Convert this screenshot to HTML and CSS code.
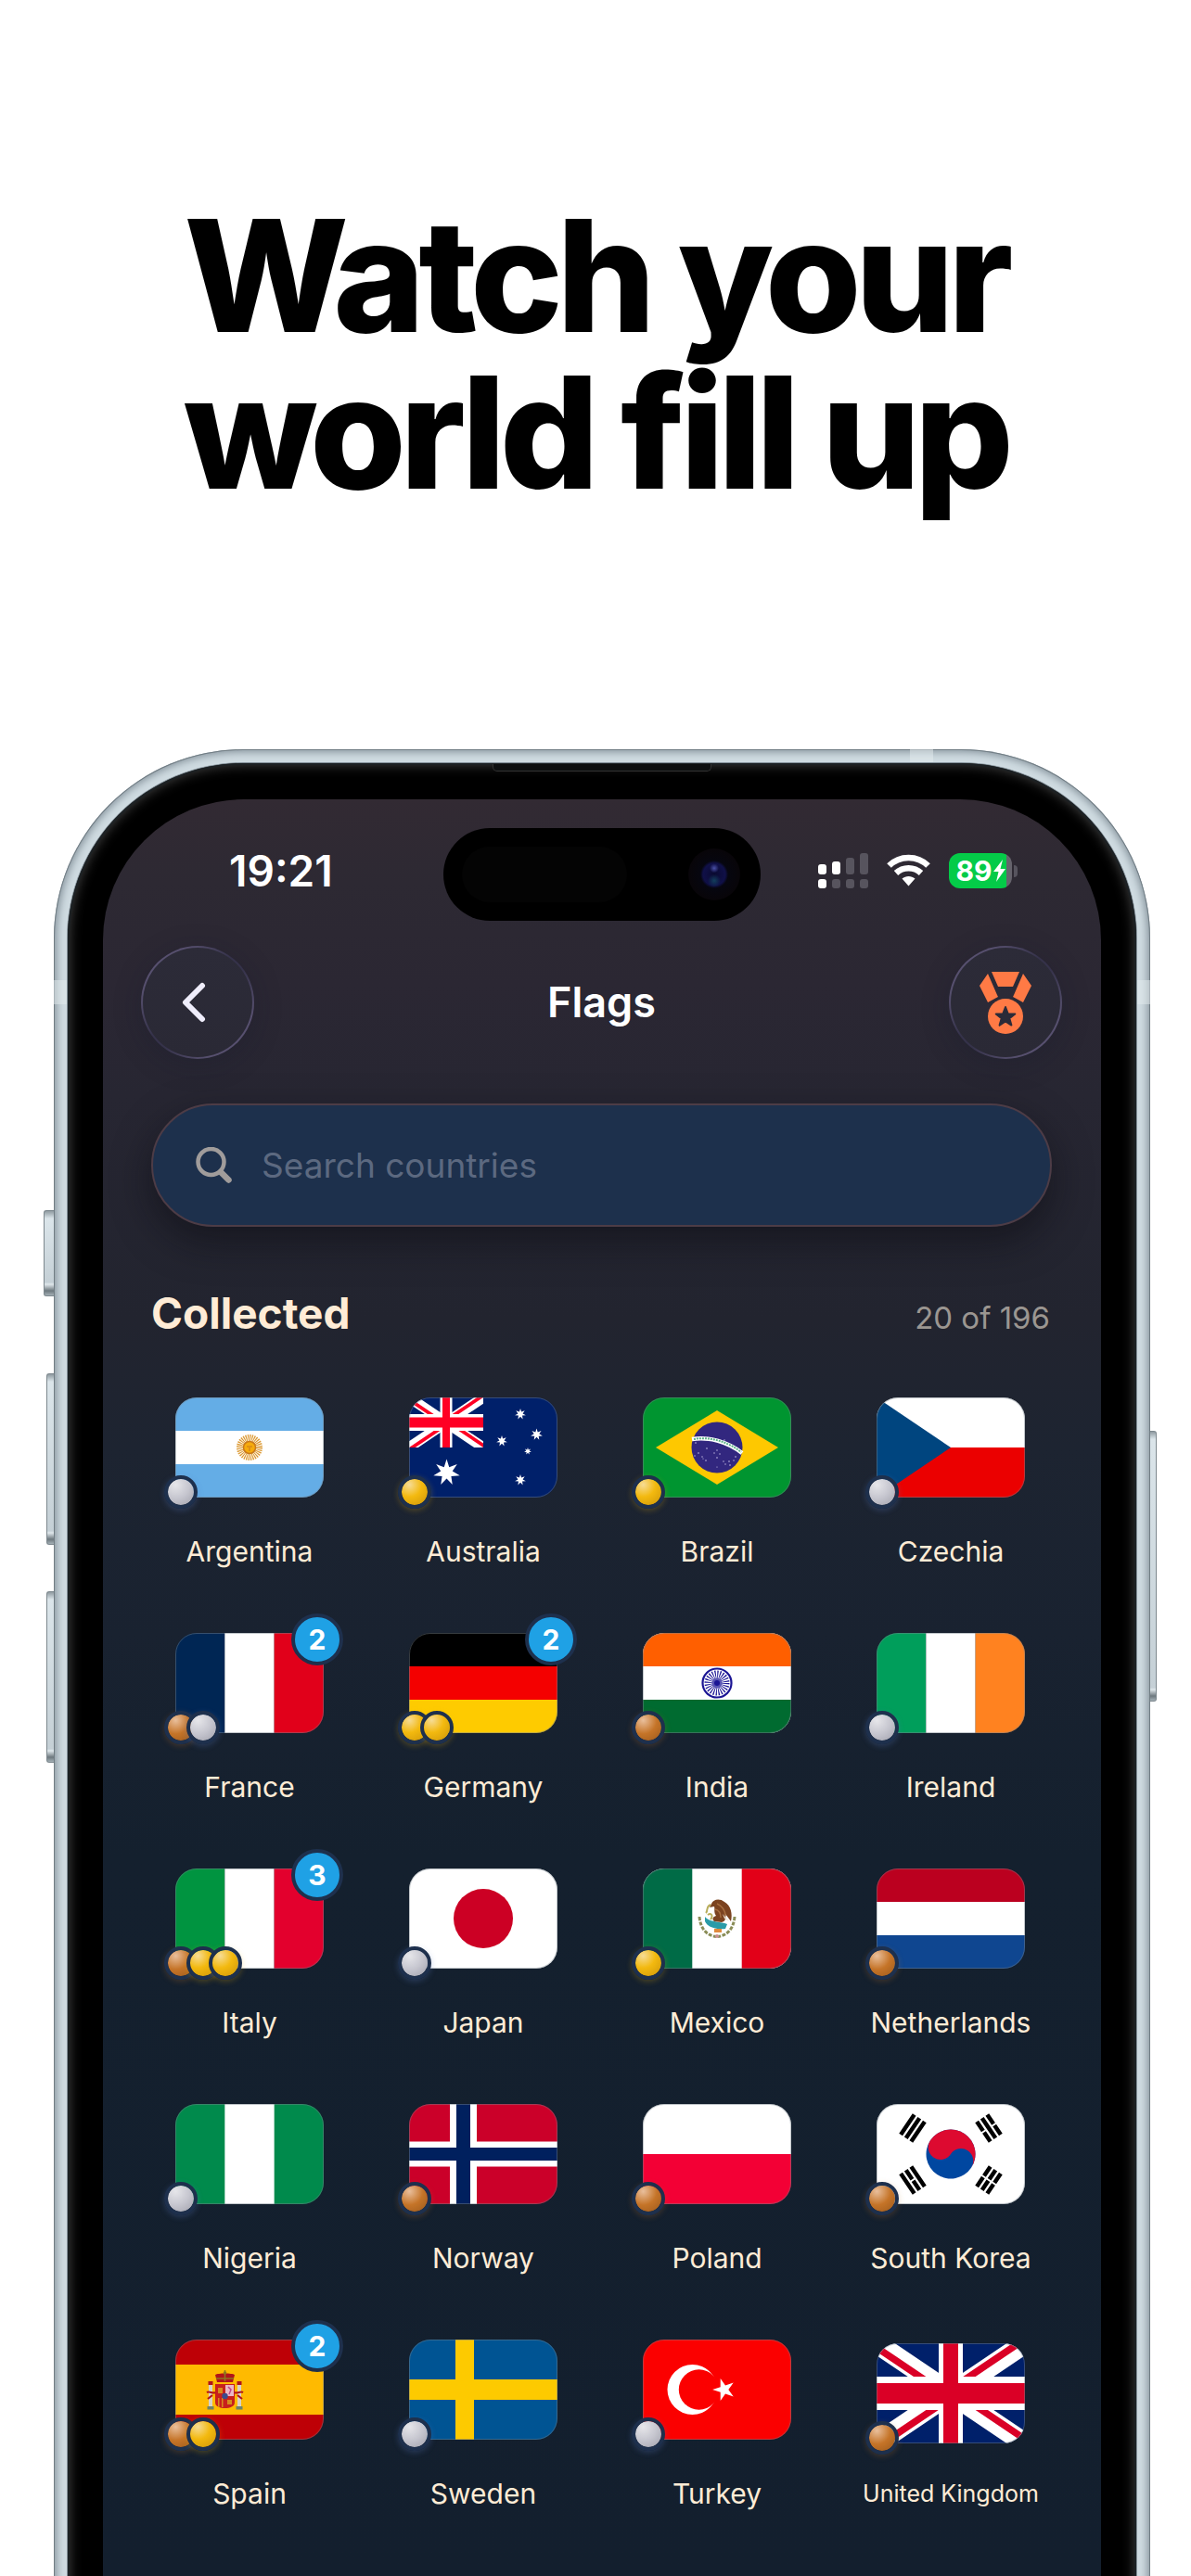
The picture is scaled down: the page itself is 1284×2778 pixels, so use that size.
FILE: index.html
```html
<!DOCTYPE html>
<html lang="en">
<head>
<meta charset="utf-8">
<meta name="viewport" content="width=device-width, initial-scale=1">
<title>Flags</title>
<link rel="stylesheet" href="styles.css">
</head>
<body>
<svg class="defs" aria-hidden="true">
  <defs>
    <clipPath id="jack-halves"><path d="M80 54h80v54zv54h-80zh-80v-54zv-54h80z"/></clipPath>
    <symbol id="union-jack" viewBox="0 0 160 108" preserveAspectRatio="none">
      <path fill="#00206a" d="M0 0h160v108H0z"/>
      <path stroke="#fff" stroke-width="22" d="M0 0l160 108M160 0L0 108"/>
      <path stroke="currentColor" stroke-width="15" clip-path="url(#jack-halves)" d="M0 0l160 108M160 0L0 108"/>
      <path fill="#fff" d="M67 0h26v108H67zM0 36h160v36H0z"/>
      <path fill="currentColor" d="M72 0h16v108H72zM0 43h160v22H0z"/>
    </symbol>
    <symbol id="star7" viewBox="-10 -10 20 20">
      <path fill="#fff" d="M0-10L1.9-4 7.8-6.2 4.3-1 9.8 2.2 3.4 2.7 4.3 9 0 4.4-4.3 9-3.4 2.7-9.8 2.2-4.3-1-7.8-6.2-1.9-4z"/>
    </symbol>
  </defs>
</svg>

<header class="hero">
  <h1 class="headline">Watch your<br>world fill up</h1>
</header>

<main class="device">
  <div class="rail rail-left">
    <span class="key key-action"></span>
    <span class="key key-volume"></span>
    <span class="key key-volume"></span>
  </div>

  <div class="frame">
    <span class="antenna antenna-top"></span>
    <span class="antenna antenna-left"></span>
    <span class="antenna antenna-right"></span>
    <div class="bezel">
      <span class="speaker"></span>
      <div class="screen">

        <div class="status">
          <span class="time">19:21</span>
          <div class="island"><span class="sensor"></span><span class="lens"></span></div>
          <div class="indicators">
            <svg width="54" height="38" viewBox="0 0 54 38" aria-label="Signal">
              <g fill="#fff"><rect y="12" width="9" height="11" rx="3"/><rect x="15" y="9" width="9" height="14" rx="3"/><rect y="28" width="9" height="10" rx="3"/></g>
              <g fill="#57545e"><rect x="30" y="5" width="9" height="18" rx="3"/><rect x="45" width="9" height="23" rx="3"/><rect x="15" y="28" width="9" height="10" rx="3"/><rect x="30" y="28" width="9" height="10" rx="3"/><rect x="45" y="28" width="9" height="10" rx="3"/></g>
            </svg>
            <svg width="47" height="36" viewBox="0 0 47 36" aria-label="Wi-Fi">
              <g fill="none" stroke="#fff" stroke-width="6.5"><path d="M2.500 12.500C14 1 33 1 44.500 12.500"/><path d="M10 20.500C17.500 13.500 29.500 13.500 37 20.500"/></g>
              <path fill="#fff" d="M16.500 26.500C20.500 23 26.500 23 30.500 26.500L23.500 34.500z"/>
            </svg>
            <div class="battery">
              <span class="cell"><span class="charge">89</span><svg width="13" height="24" viewBox="0 0 13 24"><path fill="#fff" d="M10 0L0 13h5.500L3 24 13 10H7.500z"/></svg></span>
              <span class="nub"></span>
            </div>
          </div>
        </div>

        <nav class="bar">
          <button class="round" type="button" aria-label="Back">
            <svg width="34" height="44" viewBox="0 0 34 44"><path d="M22 4L4 22l18 18" fill="none" stroke="#efedfb" stroke-width="6" stroke-linecap="round" stroke-linejoin="round"/></svg>
          </button>
          <h2 class="title">Flags</h2>
          <button class="round" type="button" aria-label="Medals">
            <svg width="56" height="67" viewBox="0 0 56 67">
              <g fill="#ff7a45">
                <path d="M13 0h30l-7 16H20z"/>
                <path d="M9 2L0 15l9 18 11-6-1-2z"/>
                <path d="M47 2l9 13-9 18-11-6 1-2z"/>
                <circle cx="28" cy="48" r="19"/>
              </g>
              <path fill="#2b2b38" stroke="#2b2b38" stroke-width="2" stroke-linejoin="round" d="M28 38l2.700 7.200 7.600.3-6 4.700 2.100 7.400L28 53.400l-6.400 4.200 2.100-7.400-6-4.700 7.600-.3z"/>
            </svg>
          </button>
        </nav>

        <label class="search">
          <svg width="39" height="39" viewBox="0 0 39 39" aria-hidden="true"><g fill="none" stroke="#a09c9b" stroke-linecap="round"><circle cx="16.500" cy="16" r="14" stroke-width="4.500"/><path d="M27 27l8.500 8.500" stroke-width="6.500"/></g></svg>
          <input class="search-input" type="search" aria-label="Search countries" placeholder="Search countries">
        </label>

        <div class="section-head">
          <h3 class="section-title">Collected</h3>
          <span class="count">20 of 196</span>
        </div>

        <ul class="grid">
          <li class="country">
            <div class="flag"><svg class="art" viewBox="0 0 160 108" preserveAspectRatio="none"><path fill="#64ade6" d="M0 0h160v108H0z"/><path fill="#fff" d="M0 36h160v36H0z"/><circle cx="80" cy="54" r="10" fill="none" stroke="#dc9a35" stroke-width="8" stroke-dasharray="1.100 .86"/><circle cx="80" cy="54" r="6.500" fill="#f6ab0c" stroke="#c9791b" stroke-width="1.500"/><path d="M77 53h6M80 54v4" stroke="#c9791b"/></svg>
            <span class="medals"><i class="medal silver"></i></span></div>
            <span class="name">Argentina</span>
          </li>
          <li class="country">
            <div class="flag"><svg class="art" viewBox="0 0 160 108" preserveAspectRatio="none"><path fill="#00206a" d="M0 0h160v108H0z"/><use href="#union-jack" width="80" height="54" color="#ff0024"/><use href="#star7" x="26" y="66" width="29" height="30"/><use href="#star7" x="114" y="11" width="12" height="14"/><use href="#star7" x="131" y="33" width="13" height="14"/><use href="#star7" x="94" y="40" width="12" height="14"/><use href="#star7" x="124" y="54" width="8" height="8"/><use href="#star7" x="114" y="82" width="12" height="14"/></svg>
            <span class="medals"><i class="medal gold"></i></span></div>
            <span class="name">Australia</span>
          </li>
          <li class="country">
            <div class="flag"><svg class="art" viewBox="0 0 160 108" preserveAspectRatio="none"><path fill="#009530" d="M0 0h160v108H0z"/><path fill="#fec800" d="M14 54l66-40 66 40-66 40z"/><circle cx="80" cy="54" r="27.500" fill="#32277f"/><path d="M53 45c18-3 39 3 54 15" fill="none" stroke="#fff" stroke-width="4.500"/><path d="M55 45c16-3 36 2 51 14" fill="none" stroke="#5bb287" stroke-width="2" stroke-dasharray="2 1"/><g fill="#c9c5e8"><circle cx="57" cy="49" r=".8"/><circle cx="69" cy="55" r=".8"/><circle cx="60" cy="60" r=".8"/><circle cx="56" cy="63" r=".7"/><circle cx="64" cy="64" r=".7"/><circle cx="68" cy="68" r=".8"/><circle cx="65" cy="66" r=".6"/><circle cx="77" cy="60" r=".7"/><circle cx="83" cy="61" r=".7"/><circle cx="80" cy="57" r=".7"/><circle cx="80" cy="65" r=".8"/><circle cx="87" cy="69" r=".7"/><circle cx="89" cy="72" r=".7"/><circle cx="93" cy="69" r=".8"/><circle cx="94" cy="73" r=".8"/><circle cx="100" cy="64" r=".8"/><circle cx="98" cy="68" r=".7"/><circle cx="80" cy="75" r=".6"/><circle cx="88" cy="46" r=".7"/></g></svg>
            <span class="medals"><i class="medal gold"></i></span></div>
            <span class="name">Brazil</span>
          </li>
          <li class="country">
            <div class="flag"><svg class="art" viewBox="0 0 160 108" preserveAspectRatio="none"><path fill="#fff" d="M0 0h160v54H0z"/><path fill="#eb0000" d="M0 54h160v54H0z"/><path fill="#00457f" d="M0 0l80 54-80 54z"/></svg>
            <span class="medals"><i class="medal silver"></i></span></div>
            <span class="name">Czechia</span>
          </li>

          <li class="country">
            <div class="flag"><svg class="art" viewBox="0 0 3 1" preserveAspectRatio="none"><path fill="#002654" d="M0 0h1v1H0z"/><path fill="#fff" d="M1 0h1v1H1z"/><path fill="#e1001a" d="M2 0h1v1H2z"/></svg>
            <span class="badge">2</span><span class="medals"><i class="medal bronze"></i><i class="medal silver"></i></span></div>
            <span class="name">France</span>
          </li>
          <li class="country">
            <div class="flag"><svg class="art" viewBox="0 0 1 3" preserveAspectRatio="none"><path d="M0 0h1v1H0z"/><path fill="#f40000" d="M0 1h1v1H0z"/><path fill="#fecb00" d="M0 2h1v1H0z"/></svg>
            <span class="badge">2</span><span class="medals"><i class="medal gold"></i><i class="medal gold"></i></span></div>
            <span class="name">Germany</span>
          </li>
          <li class="country">
            <div class="flag"><svg class="art" viewBox="0 0 160 108" preserveAspectRatio="none"><path fill="#fff" d="M0 0h160v108H0z"/><path fill="#ff5f00" d="M0 0h160v36H0z"/><path fill="#006b30" d="M0 72h160v36H0z"/><g fill="none" stroke="#1b1594"><circle cx="80" cy="54" r="15.500" stroke-width="2.200"/><circle cx="80" cy="54" r="8" stroke-width="11" stroke-dasharray=".9 1.194"/></g><circle cx="80" cy="54" r="5.500" fill="#5a56b4"/><circle cx="80" cy="54" r="3" fill="#1b1594"/></svg>
            <span class="medals"><i class="medal bronze"></i></span></div>
            <span class="name">India</span>
          </li>
          <li class="country">
            <div class="flag"><svg class="art" viewBox="0 0 3 1" preserveAspectRatio="none"><path fill="#009e5b" d="M0 0h1v1H0z"/><path fill="#fff" d="M1 0h1v1H1z"/><path fill="#ff8220" d="M2 0h1v1H2z"/></svg>
            <span class="medals"><i class="medal silver"></i></span></div>
            <span class="name">Ireland</span>
          </li>

          <li class="country">
            <div class="flag"><svg class="art" viewBox="0 0 3 1" preserveAspectRatio="none"><path fill="#009440" d="M0 0h1v1H0z"/><path fill="#fff" d="M1 0h1v1H1z"/><path fill="#e3002d" d="M2 0h1v1H2z"/></svg>
            <span class="badge">3</span><span class="medals"><i class="medal bronze"></i><i class="medal gold"></i><i class="medal gold"></i></span></div>
            <span class="name">Italy</span>
          </li>
          <li class="country">
            <div class="flag"><svg class="art" viewBox="0 0 160 108" preserveAspectRatio="none"><path fill="#fff" d="M0 0h160v108H0z"/><circle cx="80" cy="54" r="32" fill="#cc0024"/></svg>
            <span class="medals"><i class="medal silver"></i></span></div>
            <span class="name">Japan</span>
          </li>
          <li class="country">
            <div class="flag"><svg class="art" viewBox="0 0 160 108" preserveAspectRatio="none"><path fill="#fff" d="M0 0h160v108H0z"/><path fill="#006b46" d="M0 0h53.300v108H0z"/><path fill="#e20018" d="M106.700 0H160v108h-53.300z"/>
              <path d="M61 52c1 12 7 20 18 21.500M99 52c-1 12-7 20-18 21.500" fill="none" stroke="#8a8d57" stroke-width="3" stroke-dasharray="4 1.500"/>
              <path d="M67 52c4 6 16 5 24 8l-2 5c-8 1-19-1-22-8z" fill="#2a9ba8"/><path d="M77 65h8v4h-8z" fill="#e08a3c"/><circle cx="80" cy="73" r="2" fill="#c98f8f"/>
              <path d="M74 38c2-5 9-6 14-2 7 4 9 13 7 21l-6-8c1 5 0 8-4 9l-8-1c-3-3-1-5 2-6-3-4-1-7-2-10l-5 1z" fill="#7b4320"/>
              <path d="M80 38c5 2 9 7 9 13M78 44c4 1 6 4 6 9" fill="none" stroke="#a66d3f" stroke-width="1.500"/>
              <path d="M73 39c-6 3-2 6-5 9M70 50c4-3 6 1 3 5" fill="none" stroke="#b8ad5a" stroke-width="2"/><path d="M86 49l7 8-5-3z" fill="#e8dcc9"/></svg>
            <span class="medals"><i class="medal gold"></i></span></div>
            <span class="name">Mexico</span>
          </li>
          <li class="country">
            <div class="flag"><svg class="art" viewBox="0 0 1 3" preserveAspectRatio="none"><path fill="#bb001f" d="M0 0h1v1H0z"/><path fill="#fff" d="M0 1h1v1H0z"/><path fill="#0f4690" d="M0 2h1v1H0z"/></svg>
            <span class="medals"><i class="medal bronze"></i></span></div>
            <span class="name">Netherlands</span>
          </li>

          <li class="country">
            <div class="flag"><svg class="art" viewBox="0 0 3 1" preserveAspectRatio="none"><path fill="#008a4c" d="M0 0h3v1H0z"/><path fill="#fff" d="M1 0h1v1H1z"/></svg>
            <span class="medals"><i class="medal silver"></i></span></div>
            <span class="name">Nigeria</span>
          </li>
          <li class="country">
            <div class="flag"><svg class="art" viewBox="0 0 160 108" preserveAspectRatio="none"><path fill="#cb0029" d="M0 0h160v108H0z"/><path fill="#fff" d="M44 0h29v108H44zM0 40.500h160v27H0z"/><path fill="#00205e" d="M51 0h15v108H51zM0 47h160v14H0z"/></svg>
            <span class="medals"><i class="medal bronze"></i></span></div>
            <span class="name">Norway</span>
          </li>
          <li class="country">
            <div class="flag"><svg class="art" viewBox="0 0 1 2" preserveAspectRatio="none"><path fill="#fff" d="M0 0h1v1H0z"/><path fill="#f30035" d="M0 1h1v1H0z"/></svg>
            <span class="medals"><i class="medal bronze"></i></span></div>
            <span class="name">Poland</span>
          </li>
          <li class="country">
            <div class="flag"><svg class="art" viewBox="0 0 160 108" preserveAspectRatio="none"><path fill="#fff" d="M0 0h160v108H0z"/>
              <g transform="translate(80 54) rotate(33.700)"><circle r="26.500" fill="#0047a0"/><path fill="#dd0a30" d="M-26.500 0A26.500 26.500 0 0 1 26.500 0 13.250 13.250 0 0 0 0 0 13.250 13.250 0 0 1-26.500 0z"/></g>
              <path transform="translate(39 26) rotate(-56)" d="M-13-9h26v4.500h-26zM-13-2.250h26v4.500h-26zM-13 4.500h26v4.500h-26z"/>
              <path transform="translate(121 26) rotate(56)" d="M-13-9h12v4.500h-12zM1-9h12v4.500H1zM-13-2.250h26v4.500h-26zM-13 4.500h12v4.500h-12zM1 4.500h12v4.500H1z"/>
              <path transform="translate(39 82) rotate(56)" d="M-13-9h26v4.500h-26zM-13-2.250h12v4.500h-12zM1-2.250h12v4.500H1zM-13 4.500h26v4.500h-26z"/>
              <path transform="translate(121 82) rotate(-56)" d="M-13-9h12v4.500h-12zM1-9h12v4.500H1zM-13-2.250h12v4.500h-12zM1-2.250h12v4.500H1zM-13 4.500h12v4.500h-12zM1 4.500h12v4.500H1z"/></svg>
            <span class="medals"><i class="medal bronze"></i></span></div>
            <span class="name">South Korea</span>
          </li>

          <li class="country">
            <div class="flag"><svg class="art" viewBox="0 0 160 108" preserveAspectRatio="none"><path fill="#be0006" d="M0 0h160v108H0z"/><path fill="#ffba00" d="M0 27h160v54H0z"/>
              <path fill="#b0151a" d="M43 38c3-2 18-2 21 0l-2 8H45z"/><path d="M53.500 33v12M44 42h19" stroke="#8c7a1e" stroke-width="1.500"/><circle cx="53.500" cy="36" r="1.800" fill="#8c7a1e"/>
              <path fill="#c8201c" d="M43 48h21v20c0 8-21 8-21 0z"/><path fill="#eab7c6" d="M54 49h9v12h-9z"/><path fill="#d68a1e" d="M46 52h5v6h-5zM46 63h1.500v10H46zM50 63h1.500v10H50zM56 65h5v5h-5z"/><path d="M57 51l3 3-2 5" stroke="#c0488a" fill="none" stroke-width="1.500"/><circle cx="53.500" cy="61" r="3.200" fill="#3c4a8c"/>
              <path fill="#d8d2c8" d="M36 49h4v23h-4zM67 49h4v23h-4z"/><path fill="#6f8367" d="M34.500 72h7v3.500h-7zM65.500 72h7v3.500h-7z"/><path fill="#b0151a" d="M35.500 45h5v4h-5zM66.500 45h5v4h-5z"/><path d="M34 57c3-2 6 2 9 0M35 64l5-4M73 57c-3-2-6 2-9 0M72 64l-5-4" stroke="#b0151a" stroke-width="2.200" fill="none"/></svg>
            <span class="badge">2</span><span class="medals"><i class="medal bronze"></i><i class="medal gold"></i></span></div>
            <span class="name">Spain</span>
          </li>
          <li class="country">
            <div class="flag"><svg class="art" viewBox="0 0 160 108" preserveAspectRatio="none"><path fill="#005493" d="M0 0h160v108H0z"/><path fill="#fdca00" d="M50 0h20v108H50zM0 43h160v22H0z"/></svg>
            <span class="medals"><i class="medal silver"></i></span></div>
            <span class="name">Sweden</span>
          </li>
          <li class="country">
            <div class="flag"><svg class="art" viewBox="0 0 160 108" preserveAspectRatio="none"><path fill="#fb0000" d="M0 0h160v108H0z"/><circle cx="53.500" cy="54" r="27" fill="#fff"/><circle cx="60.500" cy="54" r="21.700" fill="#fb0000"/><path fill="#fff" d="M75.100 54l8.600-2.800V42.100l5.300 7.400 8.700-2.900-5.400 7.400 5.400 7.400-8.700-2.900-5.300 7.400v-9.100z"/></svg>
            <span class="medals"><i class="medal silver"></i></span></div>
            <span class="name">Turkey</span>
          </li>
          <li class="country">
            <div class="flag"><svg class="art" viewBox="0 0 160 108" preserveAspectRatio="none"><use href="#union-jack" width="160" height="108" color="#da0026"/></svg>
            <span class="medals"><i class="medal bronze"></i></span></div>
            <span class="name name-small">United Kingdom</span>
          </li>
        </ul>
      </div>
    </div>
  </div>

  <div class="rail rail-right">
    <span class="key key-power"></span>
  </div>
</main>
</body>
</html>
```

FILE: styles.css
```css
*, *::before, *::after { box-sizing: border-box; }

body {
  margin: 0;
  min-height: 100vh;
  display: flex;
  flex-direction: column;
  background: #fff;
  font-family: Inter, "Liberation Sans", sans-serif;
  color: #ffecd6;
}

h1, h2, h3, ul { margin: 0; padding: 0; }

.defs { position: absolute; width: 0; height: 0; }

/* Headline */
.hero { padding: 213px 24px 257px; }
.headline {
  color: #000;
  font-size: 168px;
  line-height: 169px;
  font-weight: 800;
  letter-spacing: -0.04em;
  text-align: center;
}

/* Phone body */
.device {
  flex: 1;
  display: flex;
  padding: 0 37px 0 47px;
  overflow: hidden;
}

.rail { display: flex; flex-direction: column; }
.rail-left { width: 11px; align-items: flex-end; padding-top: 497px; }
.rail-right { width: 7px; padding-top: 735px; }

.key {
  flex: none;
  width: 8px;
  border: 1px solid #7d888e;
  border-right: 0;
  border-radius: 3px 0 0 3px;
  background: linear-gradient(#8f9aa0, #dbe5ea 8px, #c5d0d6 calc(100% - 14px), #e0e8ec calc(100% - 12px), #6d787e calc(100% - 5px), #a3afb5);
}
.key-action { width: 11px; height: 93px; margin-bottom: 83px; }
.key-volume { height: 185px; margin-bottom: 50px; }
.key-power { width: 7px; height: 292px; border: 1px solid #7d888e; border-left: 0; border-radius: 0 3px 3px 0; }

.frame {
  position: relative;
  flex: 1;
  min-width: 0;
  display: flex;
  margin-bottom: -60px;
  padding: 15px 15px 60px;
  border-radius: 204px;
  border-bottom-left-radius: 0;
  border-bottom-right-radius: 0;
  background: #cfdbe1;
  box-shadow: inset 0 0 0 1px #717d84, inset 0 0 8px 3px #84919a;
}

.antenna { position: absolute; background: #e3ebee; opacity: .5; }
.antenna-top { top: 0; right: 234px; width: 25px; height: 15px; }
.antenna-left { top: 249px; left: 0; width: 15px; height: 26px; }
.antenna-right { top: 249px; right: 0; width: 15px; height: 26px; }

.bezel {
  position: relative;
  flex: 1;
  min-width: 0;
  margin-bottom: -60px;
  padding: 39px 38px 60px;
  border-radius: 189px 189px 0 0;
  background: #000;
  box-shadow: 0 0 0 1px #84919a, inset 0 0 0 2px #1c2124, inset 0 0 14px 1px #4a4a4a;
}

.speaker {
  position: absolute;
  top: 1px;
  left: 50%;
  width: 236px;
  height: 8px;
  margin-left: -118px;
  border: 1px solid #333;
  border-top: 0;
  border-radius: 0 0 5px 5px;
  background: #0d0f10;
}

.screen {
  min-height: 100%;
  padding-top: 31px;
  border-radius: 152px 152px 0 0;
  background: linear-gradient(#322a33, #2d2933 90px, #2b2733 200px, #272632 320px, #22242f 560px, #1d2431 700px, #192230 900px, #14202e 1140px, #131f2e);
}

/* Status bar */
.status {
  display: grid;
  grid-template-columns: 1fr auto 1fr;
  align-items: center;
  height: 100px;
}
.time {
  margin-bottom: 8px;
  padding-left: 136px;
  color: #fff;
  font-size: 46px;
  line-height: 56px;
  font-weight: 600;
}
.island {
  display: flex;
  align-items: center;
  justify-content: space-between;
  width: 342px;
  height: 100px;
  padding: 0 22px 0 20px;
  border-radius: 50px;
  background: #000;
}
.sensor { width: 178px; height: 60px; border-radius: 30px; background: #040404; }
.lens {
  width: 56px;
  height: 56px;
  border-radius: 50%;
  background:
    radial-gradient(circle at 50% 38%, #4a50a8 0, transparent 5px),
    radial-gradient(circle at 50% 62%, #123e5c 0, transparent 7px),
    radial-gradient(circle, #0a0a30 0, #101048 12px, #06060f 15px, #080509 27px);
}
.indicators {
  display: flex;
  align-items: center;
  gap: 20px;
  margin-bottom: 8px;
  padding-left: 62px;
}
.battery { display: flex; align-items: center; gap: 2px; }
.cell {
  display: flex;
  align-items: center;
  justify-content: center;
  gap: 1px;
  width: 68px;
  height: 38px;
  border-radius: 12px;
  background: linear-gradient(90deg, #04cb48 62px, #66636c 62px);
}
.charge { color: #fff; font-size: 30px; line-height: 38px; font-weight: 700; }
.nub { width: 4px; height: 13px; border-radius: 0 4px 4px 0; background: #57545e; }

/* Navigation bar */
.bar {
  display: flex;
  align-items: center;
  justify-content: space-between;
  margin-top: 27px;
  padding: 0 42px 0 41px;
}
.round {
  display: grid;
  place-items: center;
  width: 122px;
  height: 122px;
  padding: 0;
  border: 2px solid transparent;
  border-radius: 50%;
  background:
    linear-gradient(#2c2b38, #2a2935) padding-box,
    linear-gradient(135deg, #57506f 20%, #35324a 45%, #35324a 55%, #57506f 80%) border-box;
  box-shadow: 0 6px 30px rgba(20, 25, 45, .25);
}
.title { color: #fff; font-size: 45px; line-height: 56px; font-weight: 600; }

/* Search */
.search {
  display: flex;
  align-items: center;
  gap: 32px;
  height: 133px;
  margin: 48px 53px 0 52px;
  padding: 0 46px;
  border: 2px solid #4d3c46;
  border-radius: 67px;
  background: #1d304c;
  box-shadow: 0 16px 40px rgba(10, 10, 16, .5);
}
.search-input {
  flex: 1;
  min-width: 0;
  padding: 0;
  border: 0;
  outline: 0;
  background: none;
  color: #ffecd6;
  font: 400 37px/48px Inter, "Liberation Sans", sans-serif;
}
.search-input::placeholder { color: #5c6980; opacity: 1; }

/* Collection */
.section-head {
  display: flex;
  align-items: baseline;
  justify-content: space-between;
  margin: 65px 55px 63px 52px;
}
.section-title { font-size: 46px; line-height: 56px; font-weight: 700; }
.count { color: #9b9691; font-size: 33px; line-height: 40px; }

.grid {
  display: grid;
  grid-template-columns: repeat(4, 1fr);
  row-gap: 70px;
  padding: 0 36px 70px 32px;
  list-style: none;
}
.country {
  display: flex;
  flex-direction: column;
  align-items: center;
  justify-content: center;
  gap: 40px;
}
.flag { position: relative; width: 160px; height: 108px; }
.flag::after {
  content: "";
  position: absolute;
  inset: 0;
  border: 1px solid rgba(120, 130, 140, .45);
  border-radius: 23px;
}
.art { display: block; width: 100%; height: 100%; border-radius: 23px; }
.name { font-size: 30px; line-height: 36px; white-space: nowrap; }
.name-small { font-size: 25px; line-height: 29px; }

.medals {
  position: absolute;
  z-index: 1;
  left: -12px;
  bottom: -12px;
  display: flex;
}
.medal {
  width: 36px;
  height: 36px;
  border: 4px solid #1e304d;
  border-radius: 50%;
}
.medal + .medal { margin-left: -12px; }
.gold { background: radial-gradient(circle at 30% 22%, #f6dc96, #f3b90f 45%, #c68f08 110%) padding-box; box-shadow: 0 2px 6px rgba(242, 182, 11, .25); }
.silver { background: radial-gradient(circle at 30% 22%, #e6e6ea, #c6c6cf 50%, #9a9aa6 110%) padding-box; box-shadow: 0 2px 6px rgba(90, 120, 190, .3); }
.bronze { background: radial-gradient(circle at 30% 22%, #e9bf9c, #c57428 50%, #94541a 110%) padding-box; box-shadow: 0 2px 6px rgba(197, 116, 40, .25); }

.badge {
  position: absolute;
  z-index: 1;
  top: -21px;
  right: -21px;
  width: 56px;
  height: 56px;
  border: 4px solid #1e304d;
  border-radius: 50%;
  background: #1fa1e5;
  color: #fff;
  font-size: 30px;
  line-height: 48px;
  font-weight: 700;
  text-align: center;
}
```
